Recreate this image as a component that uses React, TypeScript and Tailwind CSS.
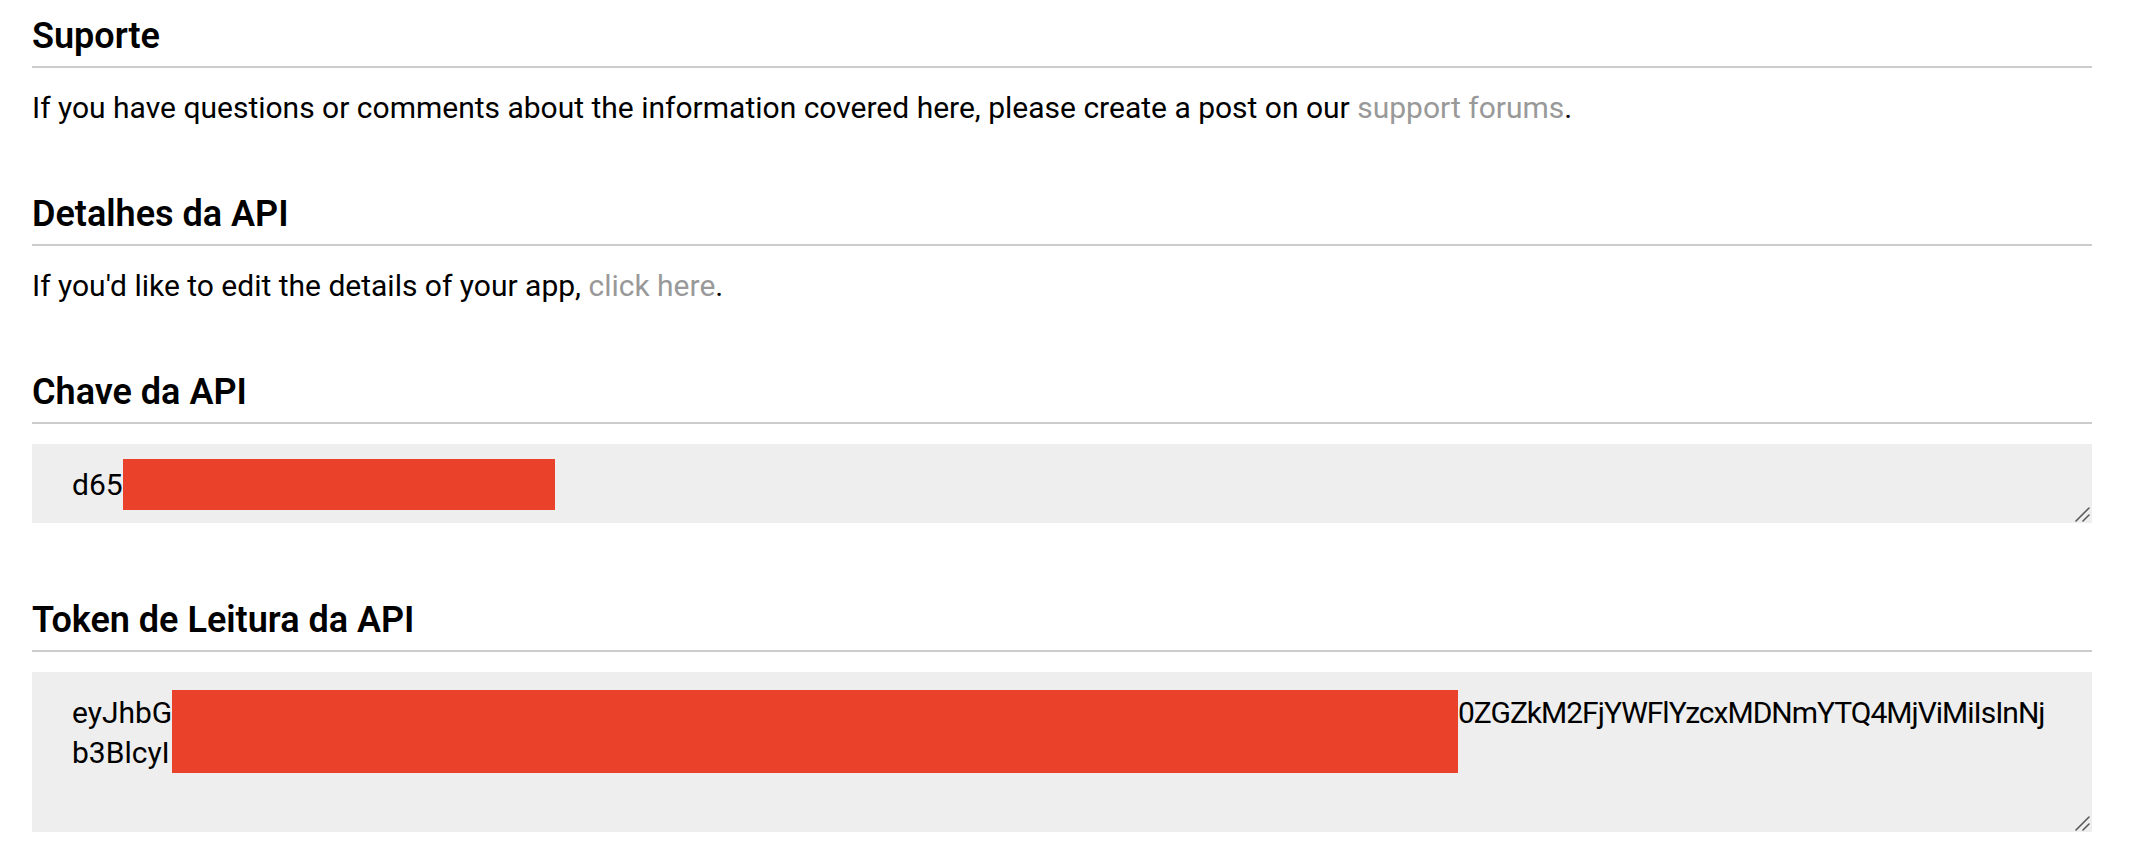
import React from "react";

function Heading({ children }: { children: React.ReactNode }) {
  return (
    <h2 className="border-b-2 border-[#cccccc] pb-2 text-[36px] font-semibold leading-[44px] text-black">
      {children}
    </h2>
  );
}

function ResizeHandle() {
  return (
    <svg
      className="pointer-events-none absolute bottom-[1px] right-[2px]"
      width="16"
      height="16"
      viewBox="0 0 16 16"
      aria-hidden="true"
    >
      <path d="M2 15 L15 2" stroke="#5a5a5a" strokeWidth="1.6" strokeLinecap="round" />
      <path d="M9 15 L15 9" stroke="#5a5a5a" strokeWidth="1.6" strokeLinecap="round" />
    </svg>
  );
}

export default function App() {
  return (
    <div className="min-h-screen bg-white pl-8 pr-10 pt-[14px] font-[Roboto,sans-serif] text-black">
      <section>
        <Heading>Suporte</Heading>
        <p className="mt-5 text-[30px] leading-[40px]">
          If you have questions or comments about the information covered here, please create a post on our{" "}
          <a href="#" className="text-[#999999] no-underline">
            support forums
          </a>
          .
        </p>
      </section>

      <section className="mt-16">
        <Heading>Detalhes da API</Heading>
        <p className="mt-5 text-[30px] leading-[40px]">
          If you'd like to edit the details of your app,{" "}
          <a href="#" className="text-[#999999] no-underline">
            click here
          </a>
          .
        </p>
      </section>

      <section className="mt-16">
        <Heading>Chave da API</Heading>
        <div className="relative mt-5 flex h-[79px] items-start bg-[#eeeeee] pl-[40px] pt-[21px] text-[30px] leading-[40px]">
          <span className="w-[51px] shrink-0">d65</span>
          <div className="-mt-[6px] h-[51px] w-[432px] shrink-0 bg-[#e9412a]" />
          <ResizeHandle />
        </div>
      </section>

      <section className="mt-[75px]">
        <Heading>Token de Leitura da API</Heading>
        <div className="relative mt-5 flex h-[160px] items-start bg-[#eeeeee] pl-[40px] pt-[21px] text-[30px] leading-[40px]">
          <div className="flex w-[100px] shrink-0 flex-col">
            <span>eyJhbG</span>
            <span>b3BlcyI</span>
          </div>
          <div className="-mt-[3px] h-[83px] w-[1286px] shrink-0 bg-[#e9412a]" />
          <span className="whitespace-nowrap tracking-[-1px]">0ZGZkM2FjYWFlYzcxMDNmYTQ4MjViMiIsInNj</span>
          <ResizeHandle />
        </div>
      </section>
    </div>
  );
}
